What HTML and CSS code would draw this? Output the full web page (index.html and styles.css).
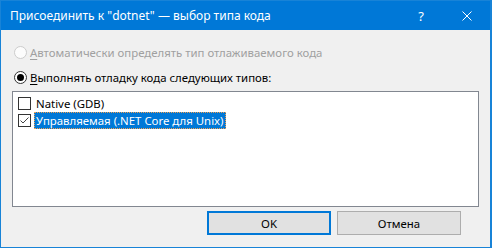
FILE: index.html
```html
<!DOCTYPE html>
<html lang="ru">
<head>
<meta charset="utf-8">
<title>Присоединить к "dotnet"</title>
<link rel="stylesheet" href="styles.css">
</head>
<body>
<div class="window">
  <div class="titlebar">
    <span class="title">Присоединить к "dotnet" — выбор типа кода</span>
    <span class="tb-btn help">?</span>
    <span class="tb-btn close">
      <svg width="10" height="10" viewBox="0 0 10 10"><path d="M0.5 0.5 L9.5 9.5 M9.5 0.5 L0.5 9.5" stroke="#fff" stroke-width="1" fill="none"/></svg>
    </span>
  </div>
  <div class="content">
    <label class="radio-row disabled">
      <span class="radio"></span>
      <span class="label"><u>А</u>втоматически определять тип отлаживаемого кода</span>
    </label>
    <label class="radio-row second">
      <span class="radio checked"><span class="dot"></span></span>
      <span class="label"><u>В</u>ыполнять отладку кода следующих типов:</span>
    </label>
    <div class="listbox">
      <div class="item">
        <span class="check"></span>
        <span class="item-text">Native (GDB)</span>
      </div>
      <div class="item">
        <span class="check">
          <svg width="11" height="11" viewBox="0 0 11 11"><path d="M1.5 5.5 L4 8 L9.5 2.5" stroke="#444" stroke-width="1" fill="none"/></svg>
        </span>
        <span class="item-text selected">Управляемая (.NET Core для Unix)</span>
      </div>
    </div>
    <div class="buttons">
      <button class="btn default">OK</button>
      <button class="btn">Отмена</button>
    </div>
  </div>
</div>
</body>
</html>
```
FILE: styles.css
```css
html, body {
  margin: 0;
  padding: 0;
  background: #ffffff;
}
body {
  font-family: "Noto Sans", "Liberation Sans", sans-serif;
  font-size: 11.4px;
  color: #000;
}
.window {
  width: 492px;
  height: 248px;
  box-sizing: border-box;
  border: 1px solid #1883d7;
  border-right-width: 2px;
  display: flex;
  flex-direction: column;
  background: #f0f0f0;
}
.titlebar {
  height: 29px;
  background: #0078d7;
  color: #fff;
  display: flex;
  align-items: center;
  padding-left: 9px;
  flex-shrink: 0;
}
.title {
  flex: 1;
  white-space: nowrap;
  font-size: 12px;
}
.tb-btn {
  display: flex;
  align-items: center;
  justify-content: center;
  height: 29px;
}
.help {
  width: 46px;
  font-size: 13px;
}
.close {
  width: 46px;
  margin-right: 0;
}
.content {
  flex: 1;
  display: flex;
  flex-direction: column;
  padding: 0 0 0 11px;
}
.radio-row {
  display: flex;
  align-items: center;
  height: 16px;
  margin-top: 14px;
  margin-left: 2px;
}
.radio-row.second {
  margin-top: 9px;
}
.radio {
  width: 11px;
  height: 11px;
  border: 1px solid #333;
  border-radius: 50%;
  background: #fff;
  display: flex;
  align-items: center;
  justify-content: center;
  margin-right: 3px;
  flex-shrink: 0;
}
.disabled .radio {
  border-color: #cccccc;
  background: #fcfcfc;
}
.disabled .label {
  color: #a0a0a0;
}
.dot {
  width: 7px;
  height: 7px;
  border-radius: 50%;
  background: #000;
}
.label {
  white-space: nowrap;
}
.label u {
  text-decoration-thickness: 1px;
  text-underline-offset: 2px;
}
.listbox {
  margin-top: 6px;
  width: 467px;
  height: 116px;
  box-sizing: border-box;
  border: 1px solid #828790;
  background: #fff;
  padding: 3px 0 0 5px;
}
.item {
  display: flex;
  align-items: center;
  height: 17px;
}
.check {
  width: 11px;
  height: 11px;
  border: 1px solid #333;
  background: #fff;
  margin-right: 3px;
  flex-shrink: 0;
  display: flex;
}
.item-text {
  padding: 0 2px;
  height: 17px;
  line-height: 17px;
  box-sizing: border-box;
  white-space: nowrap;
}
.item-text.selected {
  background: #0078d7;
  color: #fff;
  outline: 1px dotted #f0a050;
  outline-offset: -1px;
}
.buttons {
  display: flex;
  justify-content: flex-end;
  gap: 6px;
  margin-top: 4px;
  padding-right: 29px;
}
.btn {
  font-family: inherit;
  font-size: 11.4px;
  width: 124px;
  height: 24px;
  box-sizing: border-box;
  background: #e1e1e1;
  border: 1px solid #adadad;
  color: #000;
  padding: 0;
  margin: 0;
}
.btn.default {
  border: 2px solid #0078d7;
}
```
